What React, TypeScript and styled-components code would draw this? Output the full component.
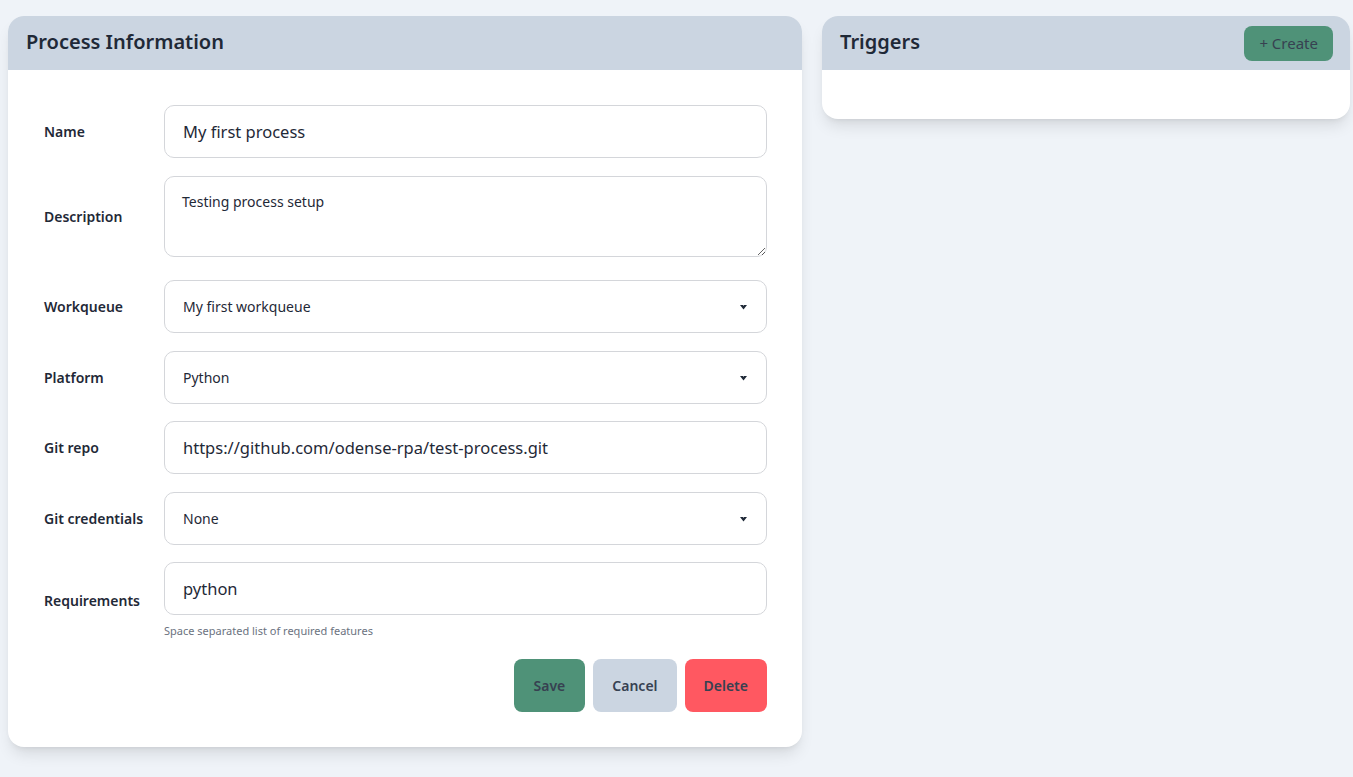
import styled, { createGlobalStyle } from 'styled-components'

const Global = createGlobalStyle`
    html, body {
        margin: 0;
        background: #eff3f8;
        font-family: "Noto Sans", "Open Sans", sans-serif;
        color: #1f2937;
    }
`

const Page = styled.div`
    display: grid;
    grid-template-columns: 794fr 528fr;
    gap: 20px;
    align-items: start;
    padding: 16px 3px 30px 8px;
`

const Card = styled.section`
    background: #ffffff;
    border-radius: 16px;
    overflow: hidden;
    box-shadow: 0 10px 15px -3px rgba(0, 0, 0, 0.1), 0 4px 6px -4px rgba(0, 0, 0, 0.1);
`

const Header = styled.div`
    display: flex;
    align-items: center;
    justify-content: space-between;
    height: 54px;
    padding: 0 17px 3px 18px;
    background: #cbd5e1;
    box-sizing: border-box;
`

const Title = styled.h2`
    margin: 0;
    font-size: 20px;
    font-weight: 600;
    color: #1f2937;
`

const Body = styled.div<{ $empty?: boolean }>`
    padding: ${p => (p.$empty ? '0' : '35px 35px 35px 36px')};
    height: ${p => (p.$empty ? '49px' : 'auto')};
`

const Form = styled.form`
    display: flex;
    flex-direction: column;
    gap: 17.5px;
`

const Row = styled.div<{ $extra?: number }>`
    display: grid;
    grid-template-columns: 120px 1fr;
    align-items: center;
    margin-top: ${p => p.$extra ?? 0}px;
`

const Label = styled.label`
    font-size: 14px;
    font-weight: 600;
    color: #1f2937;
`

const Field = styled.div`
    display: flex;
    flex-direction: column;
`

const Input = styled.input`
    height: 53px;
    box-sizing: border-box;
    border: 1px solid #d4d6da;
    border-radius: 10px;
    padding: 0 18px;
    font-family: inherit;
    font-size: 16.5px;
    color: #1f2937;
    background: #fff;
    outline: none;
`

const TextArea = styled.textarea`
    display: block;
    height: 81px;
    box-sizing: border-box;
    border: 1px solid #d4d6da;
    border-radius: 10px;
    padding: 15px 17px;
    font-family: inherit;
    font-size: 14px;
    color: #1f2937;
    resize: vertical;
    outline: none;
`

const SelectBox = styled.div`
    position: relative;
    display: flex;
    align-items: center;
    height: 53px;
    box-sizing: border-box;
    border: 1px solid #d4d6da;
    border-radius: 10px;
    padding: 0 18px;
    font-size: 14px;
    color: #1f2937;
    background: #fff;
`

const Caret = styled.svg`
    position: absolute;
    right: 19px;
    top: 24px;
`

const Help = styled.span`
    margin-top: 8px;
    font-size: 11px;
    color: #6b7280;
`

const Actions = styled.div`
    display: flex;
    justify-content: flex-end;
    gap: 8px;
    margin-top: 3px;
`

const Button = styled.button<{ $tone: 'save' | 'cancel' | 'delete' }>`
    height: 53px;
    padding: 0 ${p => (p.$tone === 'save' ? 20 : 19)}px;
    border: none;
    border-radius: 8px;
    font-family: inherit;
    font-size: 14px;
    font-weight: 600;
    color: #374151;
    background: ${p => (p.$tone === 'save' ? '#4f9278' : p.$tone === 'cancel' ? '#cbd5e1' : '#ff5861')};
    cursor: pointer;
`

const CreateButton = styled.button`
    height: 35px;
    padding: 0 15px;
    border: none;
    border-radius: 8px;
    font-family: inherit;
    font-size: 15px;
    color: #374151;
    background: #4f9278;
    margin-top: 3px;
`

function Select({ value }: { value: string }) {
    return (
        <SelectBox>
            {value}
            <Caret width="7" height="5" viewBox="0 0 7 5">
                <polygon points="0,0 3,0 3.5,1 4,0 7,0 3.5,4.5" fill="#1f2937" />
            </Caret>
        </SelectBox>
    )
}

export default function App() {
    return (
        <>
            <Global />
            <Page>
                <Card>
                    <Header>
                        <Title>Process Information</Title>
                    </Header>
                    <Body>
                        <Form onSubmit={e => e.preventDefault()}>
                            <Row>
                                <Label>Name</Label>
                                <Input defaultValue="My first process" />
                            </Row>
                            <Row>
                                <Label>Description</Label>
                                <TextArea defaultValue="Testing process setup" />
                            </Row>
                            <Row $extra={6}>
                                <Label>Workqueue</Label>
                                <Select value="My first workqueue" />
                            </Row>
                            <Row>
                                <Label>Platform</Label>
                                <Select value="Python" />
                            </Row>
                            <Row>
                                <Label>Git repo</Label>
                                <Input defaultValue="https://github.com/odense-rpa/test-process.git" />
                            </Row>
                            <Row>
                                <Label>Git credentials</Label>
                                <Select value="None" />
                            </Row>
                            <Row>
                                <Label>Requirements</Label>
                                <Field>
                                    <Input defaultValue="python" />
                                    <Help>Space separated list of required features</Help>
                                </Field>
                            </Row>
                            <Actions>
                                <Button $tone="save">Save</Button>
                                <Button $tone="cancel">Cancel</Button>
                                <Button $tone="delete">Delete</Button>
                            </Actions>
                        </Form>
                    </Body>
                </Card>
                <Card>
                    <Header>
                        <Title>Triggers</Title>
                        <CreateButton>+ Create</CreateButton>
                    </Header>
                    <Body $empty />
                </Card>
            </Page>
        </>
    )
}
